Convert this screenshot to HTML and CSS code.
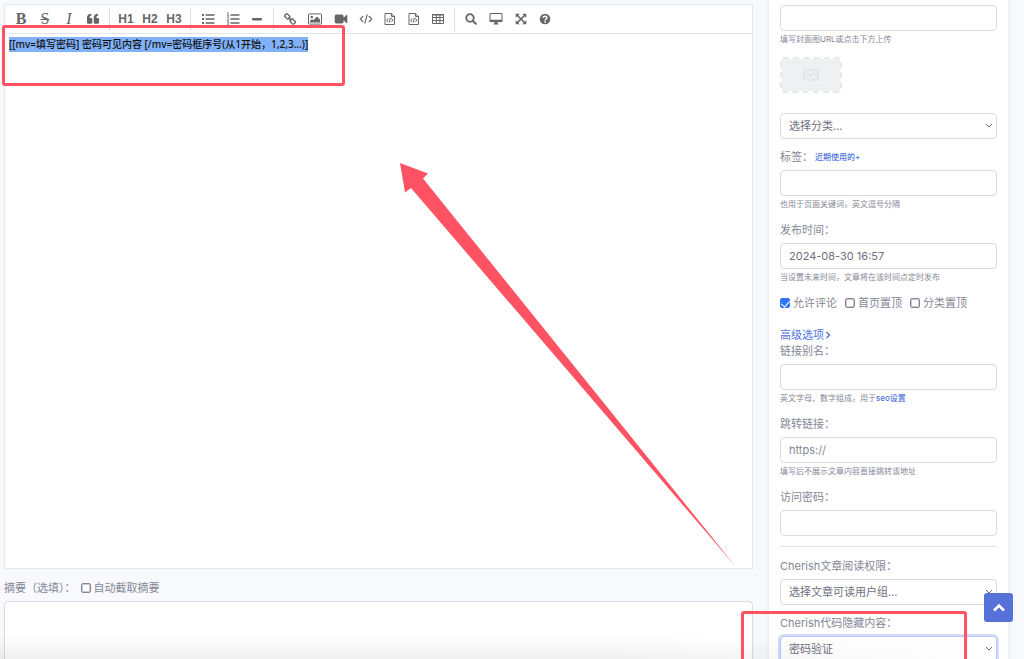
FILE: index.html
```html
<!DOCTYPE html>
<html lang="zh-CN">
<head>
<meta charset="utf-8">
<meta name="viewport" content="width=device-width, initial-scale=1">
<title>写文章</title>
<link rel="stylesheet" href="styles.css">
</head>
<body>
<div class="page">
  <main class="main">
    <section class="editor">
      <div class="toolbar" role="toolbar" aria-label="编辑器工具栏">
        <button type="button" class="tool tool-serif" aria-label="粗体"><b>B</b></button>
        <button type="button" class="tool tool-serif" aria-label="删除线"><s>S</s></button>
        <button type="button" class="tool tool-serif" aria-label="斜体"><i>I</i></button>
        <button type="button" class="tool" aria-label="引用"><svg width="14" height="12" viewBox="0 0 14 12"><path fill="currentColor" d="M1 6V4.500C1 2.300 2.700.800 5.300.800v1.900C4.300 2.700 3.700 3.300 3.700 4.300V5H5.100a1.200 1.200 0 0 1 1.200 1.200v3.200A1.300 1.300 0 0 1 5 10.700H2.300A1.300 1.300 0 0 1 1 9.400zM7.700 6V4.500C7.700 2.300 9.400.800 12 .800v1.900c-1 0-1.600.6-1.600 1.600V5h1.400a1.200 1.200 0 0 1 1.200 1.200v3.200a1.300 1.300 0 0 1-1.300 1.300H9A1.300 1.300 0 0 1 7.700 9.400z"/></svg></button>
        <span class="divider"></span>
        <button type="button" class="tool tool-heading">H1</button>
        <button type="button" class="tool tool-heading">H2</button>
        <button type="button" class="tool tool-heading">H3</button>
        <span class="divider"></span>
        <button type="button" class="tool tool-wide" aria-label="无序列表"><svg width="14" height="12" viewBox="0 0 14 12"><path fill="currentColor" d="M1 1h2v2H1zM1 5h2v2H1zM1 9h2v2H1zM4.500 1.200h9v1.600h-9zM4.500 5.200h9v1.600h-9zM4.500 9.200h9v1.600h-9z"/></svg></button>
        <button type="button" class="tool" aria-label="有序列表"><svg width="14" height="14" viewBox="0 0 14 14"><path fill="currentColor" d="M4.500 2.200h9v1.600h-9zM4.500 6.200h9v1.600h-9zM4.500 10.200h9v1.600h-9z"/><path fill="none" stroke="currentColor" stroke-width=".8" d="M1 1.200l1-.5v3.300M.8 4h2.400M1 5.800c.5-.8 2-.5 1.800.4L1 8.300h2.200M1 10h2L1.900 11.200c1.600 0 1.400 2-.9 1.600"/></svg></button>
        <button type="button" class="tool" aria-label="横线"><svg width="10" height="12" viewBox="0 0 10 12"><rect y="5" width="10" height="2.400" rx=".8" fill="currentColor"/></svg></button>
        <span class="divider"></span>
        <button type="button" class="tool" aria-label="链接"><svg width="12" height="12" viewBox="0 0 12 12"><g fill="none" stroke="currentColor" stroke-width="1.400"><rect x="-2.600" y="-1.900" width="5.200" height="3.800" rx="1.500" transform="translate(3.300 3.500) rotate(45)"/><rect x="-2.600" y="-1.900" width="5.200" height="3.800" rx="1.500" transform="translate(8.700 8.500) rotate(45)"/><path d="M4.500 4.500l3 3"/></g></svg></button>
        <button type="button" class="tool tool-wide" aria-label="图片"><svg width="14" height="12" viewBox="0 0 14 12"><rect x=".5" y=".9" width="13" height="10.200" rx=".8" fill="none" stroke="currentColor"/><circle cx="3.800" cy="4" r="1.200" fill="currentColor"/><path fill="currentColor" d="M2 9.600V8l2-2 1.400 1.200L9 3.600l3 3v3z"/></svg></button>
        <button type="button" class="tool tool-wide" aria-label="视频"><svg width="14" height="12" viewBox="0 0 14 12"><path fill="currentColor" d="M2.500 1.500h5.300A1.800 1.800 0 0 1 9.600 3.300v1.500L12.300 2c.4-.4 1-.2 1 .4v7.200c0 .6-.6.800-1 .4L9.600 7.200v1.500a1.800 1.800 0 0 1-1.800 1.800H2.500A1.800 1.800 0 0 1 .7 8.700V3.300a1.800 1.800 0 0 1 1.800-1.800z"/></svg></button>
        <button type="button" class="tool" aria-label="代码"><svg width="14" height="12" viewBox="0 0 14 12"><path fill="none" stroke="currentColor" stroke-width="1.100" d="M4.200 3L1.200 6l3 3M9.800 3l3 3-3 3M8.200 1.500L5.800 10.500"/></svg></button>
        <button type="button" class="tool" aria-label="行内代码"><svg width="12" height="14" viewBox="0 0 12 14"><path fill="none" stroke="currentColor" d="M1 1.500h6.500l3 3v8H1zM7.500 1.500v3h3M4.200 6.300L2.800 8.200l1.400 1.900M7.400 6.300l1.400 1.900-1.400 1.900M6.500 5.800l-1.400 4.800"/></svg></button>
        <button type="button" class="tool" aria-label="代码块"><svg width="12" height="14" viewBox="0 0 12 14"><path fill="none" stroke="currentColor" d="M1 1.500h6.500l3 3v8H1zM7.500 1.500v3h3M4.200 6.300L2.800 8.200l1.400 1.900M7.400 6.300l1.400 1.900-1.400 1.900M6.500 5.800l-1.400 4.800"/></svg></button>
        <button type="button" class="tool" aria-label="表格"><svg width="12" height="12" viewBox="0 0 12 12"><path fill="none" stroke="currentColor" d="M.5 1.500h11v9H.5zM.5 4.500h11M.5 7.500h11M4.300 2v8.500M7.900 2v8.500"/><path fill="currentColor" d="M.5 1h11v1.500H.5z"/></svg></button>
        <span class="divider"></span>
        <button type="button" class="tool" aria-label="搜索"><svg width="12" height="12" viewBox="0 0 12 12"><circle cx="5" cy="5" r="3.800" fill="none" stroke="currentColor" stroke-width="1.800"/><path stroke="currentColor" stroke-width="2" stroke-linecap="round" d="M8 8l2.800 2.800"/></svg></button>
        <button type="button" class="tool tool-wide" aria-label="预览"><svg width="14" height="14" viewBox="0 0 14 14"><path fill="currentColor" fill-rule="evenodd" d="M1.300 1h11.400a.8.8 0 0 1 .8.8v7.400a.8.8 0 0 1-.8.800H8.300l.5 1.500h.7v.9h-5v-.9h.7L5.700 10H1.300a.8.8 0 0 1-.8-.8V1.800a.8.8 0 0 1 .8-.8zm.2 1v5.800h11V2z"/></svg></button>
        <button type="button" class="tool" aria-label="全屏"><svg width="12" height="12" viewBox="0 0 12 12"><path fill="currentColor" d="M.7.700h4L.7 4.700zM11.300.700v4l-4-4zM.7 11.300v-4l4 4zM11.300 11.300h-4l4-4z"/><path stroke="currentColor" stroke-width="1.700" d="M2 2l8 8M10 2l-8 8"/></svg></button>
        <button type="button" class="tool" aria-label="帮助"><svg width="12" height="12" viewBox="0 0 12 12"><circle cx="6" cy="6" r="5.300" fill="currentColor"/><path fill="none" stroke="#fff" stroke-width="1.500" d="M4 4.700c.2-2 3.900-2 3.900.1C7.900 6 6.100 6 6.100 7.400M6.100 8.200v1.500"/></svg></button>
      </div>
      <div class="editor-body" contenteditable="true" role="textbox" aria-label="文章内容" spellcheck="false"><span class="selected">[[mv=填写密码] 密码可见内容 [/mv=密码框序号(从1开始，1,2,3...)]</span></div>
    </section>
    <div class="excerpt-row">
      <label for="excerpt">摘要（选填）：</label>
      <label class="check"><input type="checkbox">自动截取摘要</label>
    </div>
    <textarea id="excerpt" class="excerpt"></textarea>
  </main>

  <aside class="sidebar">
    <div class="group">
      <input class="control" type="text" aria-label="封面图URL" aria-describedby="cover-help">
      <small class="help" id="cover-help">填写封面图URL或点击下方上传</small>
    </div>
    <button type="button" class="cover" aria-label="上传封面">
      <span class="cover-inner"><svg width="16" height="12" viewBox="0 0 16 12"><path fill="none" stroke="#d9dbdf" d="M1 1h14v10H1zM1.500 9l3.500-4 3 3.500M6.500 7L10.500 3.500l4.500 5"/></svg></span>
    </button>
    <div class="select">
      <select class="control" aria-label="分类"><option>选择分类...</option></select>
      <svg class="chevron" width="8" height="6" viewBox="0 0 8 6"><path d="M1 1l3 3 3-3"/></svg>
    </div>
    <div class="group group-tags">
      <div class="label-row"><label for="tags">标签：</label><a href="#" class="small-link">近期使用的+</a></div>
      <input class="control" id="tags" type="text">
      <small class="help">也用于页面关键词，英文逗号分隔</small>
    </div>
    <div class="group">
      <label class="label" for="date">发布时间：</label>
      <input class="control" id="date" type="text" value="2024-08-30 16:57">
      <small class="help">当设置未来时间，文章将在该时间点定时发布</small>
    </div>
    <div class="checks">
      <label class="check"><input type="checkbox" checked>允许评论</label>
      <label class="check"><input type="checkbox">首页置顶</label>
      <label class="check"><input type="checkbox">分类置顶</label>
    </div>
    <a href="#" class="advanced">高级选项<svg width="6" height="8" viewBox="0 0 6 8"><path d="M1.500 1l3 3-3 3"/></svg></a>
    <div class="group">
      <label class="label" for="alias">链接别名：</label>
      <input class="control" id="alias" type="text">
      <small class="help">英文字母、数字组成，用于<a href="#">seo设置</a></small>
    </div>
    <div class="group">
      <label class="label" for="link">跳转链接：</label>
      <input class="control" id="link" type="text" placeholder="https://">
      <small class="help">填写后不展示文章内容直接跳转该地址</small>
    </div>
    <div>
      <label class="label" for="password">访问密码：</label>
      <input class="control" id="password" type="text">
    </div>
    <hr class="rule">
    <div class="group-select">
      <label class="label" for="role">Cherish文章阅读权限：</label>
      <div class="select">
        <select class="control" id="role"><option>选择文章可读用户组...</option></select>
        <svg class="chevron" width="8" height="6" viewBox="0 0 8 6"><path d="M1 1l3 3 3-3"/></svg>
      </div>
    </div>
    <div class="group-select">
      <label class="label" for="hidden">Cherish代码隐藏内容：</label>
      <div class="select">
        <select class="control is-focused" id="hidden"><option>密码验证</option></select>
        <svg class="chevron" width="8" height="6" viewBox="0 0 8 6"><path d="M1 1l3 3 3-3"/></svg>
      </div>
    </div>
  </aside>

  <div class="bottom-shade"></div>
  <button type="button" class="to-top" aria-label="返回顶部"><svg width="14" height="10" viewBox="0 0 14 10"><path d="M2 7.500l5-5 5 5"/></svg></button>
  <div class="mark mark-code"></div>
  <div class="mark mark-option"></div>
  <svg class="arrow" width="336" height="404" viewBox="0 0 336 404"><path fill="#ff5364" d="M0 0L28 10.500 23 15.500 336 404 11 25 5 29.500z"/></svg>
</div>
</body>
</html>
```
FILE: styles.css
```css
* {
  box-sizing: border-box;
}

body {
  margin: 0;
  background: #f8f9fc;
  color: #858796;
  font-family: Inter, "Noto Sans CJK SC", sans-serif;
  font-size: 11px;
  line-height: 16px;
}

button,
input,
select,
textarea {
  margin: 0;
  font: inherit;
}

a {
  color: #4e73df;
  text-decoration: none;
}

.page {
  position: relative;
  display: flex;
  gap: 16px;
  height: 100vh;
  padding: 0 16px 0 4px;
  overflow: hidden;
}

.main {
  flex: 1;
  min-width: 0;
  padding-top: 4px;
}

.editor {
  background: #fff;
  border: 1px solid #e6e7ea;
}

.toolbar {
  display: flex;
  align-items: center;
  height: 29px;
  padding: 0 4px;
  border-bottom: 1px solid #e3e4e6;
}

.tool {
  display: flex;
  flex: none;
  align-items: center;
  justify-content: center;
  width: 24px;
  height: 24px;
  padding: 0;
  border: 0;
  background: none;
  color: #666;
}

.tool-wide {
  width: 26px;
}

.tool-serif {
  font-family: "Liberation Serif", serif;
  font-size: 16px;
}

.tool-heading {
  font-family: "Liberation Sans", sans-serif;
  font-size: 12px;
  font-weight: 700;
}

.divider {
  width: 1px;
  height: 23px;
  margin: 0 4px;
  background: #ddd;
}

.editor-body {
  height: 534px;
  padding: 3px 4px;
  color: #111;
  font-family: "Noto Sans", "Noto Sans CJK SC", sans-serif;
  font-size: 10px;
  font-weight: 500;
  line-height: 15px;
  outline: 0;
}

.selected {
  display: inline-block;
  background: #80b1f9;
}

.excerpt-row {
  display: flex;
  align-items: center;
  gap: 5px;
  margin: 11px 0 5px;
}

.excerpt {
  display: block;
  width: 100%;
  height: 80px;
  border: 1px solid #d9dae6;
  border-radius: 4px;
  background: #fff;
  resize: none;
}

.check {
  display: flex;
  align-items: center;
  gap: 3px;
}

.check input {
  width: 10px;
  height: 10px;
  border: 1px solid #858796;
  border-radius: 2px;
  background: #fff;
  appearance: none;
  box-shadow: inset 0 0 0 1px #c9cad3;
}

.check input:checked {
  border-color: #2f75f6;
  background: #2f75f6;
  box-shadow: none;
}

.check input:checked::after {
  content: "";
  display: block;
  width: 4px;
  height: 7px;
  margin: 0 auto;
  border: solid #fff;
  border-width: 0 1px 1px 0;
  transform: rotate(42deg);
}

.sidebar {
  flex: none;
  width: 239px;
  height: 720px;
  padding: 5px 11px;
  background: #fff;
  box-shadow: 0 0 4px rgba(58, 59, 69, 0.12);
}

.group {
  margin-bottom: 12px;
}

.group-tags {
  margin-top: 10px;
}

.group-select {
  margin-bottom: 10px;
}

.label,
.label-row {
  display: block;
  margin-bottom: 5px;
}

.label-row {
  display: flex;
  gap: 2px;
}

.small-link,
.help a {
  font-size: 8px;
  font-weight: 500;
}

.control {
  display: block;
  width: 100%;
  height: 26px;
  padding: 0 8px;
  border: 1px solid #d9dae6;
  border-radius: 4px;
  background: #fff;
  color: #6e707e;
  outline: 0;
  appearance: none;
}

.control::placeholder {
  color: #858796;
}

.control.is-focused {
  border-color: #bac8f3;
  box-shadow: 0 0 0 2px #d3dcf7;
}

.help {
  display: block;
  margin-top: 2px;
  font-size: 8px;
  line-height: 12px;
}

.cover {
  display: block;
  width: 62px;
  height: 36px;
  margin-bottom: 20px;
  padding: 0;
  border: 2px dashed #e8e9ec;
  border-radius: 3px;
  background: #fff;
}

.cover-inner {
  display: flex;
  align-items: center;
  justify-content: center;
  height: 100%;
  background: #eff0f2;
}

.select {
  position: relative;
}

.chevron {
  position: absolute;
  top: 10px;
  right: 4px;
  fill: none;
  stroke: #6e707e;
  pointer-events: none;
}

.checks {
  display: flex;
  gap: 8px;
  margin-bottom: 16px;
}

.advanced {
  display: flex;
  align-items: center;
  gap: 1px;
}

.advanced svg {
  fill: none;
  stroke: #4e73df;
  stroke-width: 1.4;
}

.rule {
  height: 1px;
  margin: 10px 0 11px;
  border: 0;
  background: #e3e4ea;
}

.bottom-shade {
  position: absolute;
  right: 24px;
  bottom: 0;
  left: 0;
  height: 24px;
  background: linear-gradient(transparent, rgba(0, 0, 0, 0.06));
  mask-image: linear-gradient(to right, #000 60%, transparent);
  pointer-events: none;
}

.to-top {
  position: absolute;
  right: 11px;
  bottom: 37px;
  display: flex;
  align-items: center;
  justify-content: center;
  width: 29px;
  height: 29px;
  padding: 0;
  border: 0;
  border-radius: 3px;
  background: #5672d9;
}

.to-top svg {
  fill: none;
  stroke: #fff;
  stroke-width: 2.6;
}

.mark {
  position: absolute;
  border: 3px solid #ff5364;
  border-radius: 3px;
  pointer-events: none;
}

.mark-code {
  top: 25px;
  left: 2px;
  width: 343px;
  height: 61px;
}

.mark-option {
  top: 611px;
  left: 741px;
  width: 226px;
  height: 60px;
}

.arrow {
  position: absolute;
  top: 163px;
  left: 400px;
  pointer-events: none;
}
```
